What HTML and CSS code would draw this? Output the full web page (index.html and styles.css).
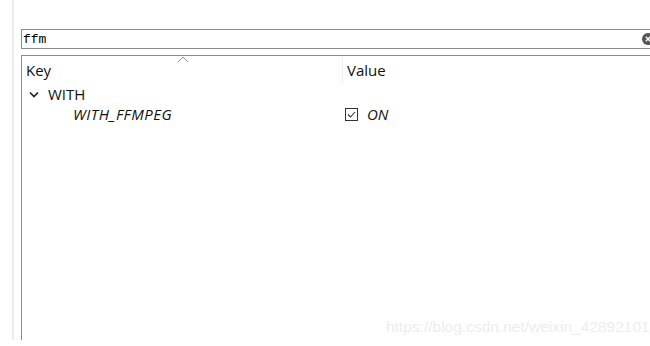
FILE: index.html
```html
<!DOCTYPE html>
<html lang="en">
<head>
    <meta charset="UTF-8">
    <title>CMake Cache</title>
    <link rel="stylesheet" href="styles.css">
</head>
<body>
    <div class="panel">
        <div class="search">
            <span class="search-text">ffm</span>
            <span class="clear-btn">
                <svg width="12" height="12" viewBox="0 0 12 12">
                    <circle cx="6" cy="6" r="6" fill="#555"/>
                    <path d="M3.8 3.8 L8.2 8.2 M8.2 3.8 L3.8 8.2" stroke="#fff" stroke-width="1.4"/>
                </svg>
            </span>
        </div>
        <div class="tree">
            <div class="tree-header">
                <div class="col-key">Key</div>
                <span class="sort-caret">
                    <svg width="12" height="7" viewBox="0 0 12 7">
                        <path d="M1 6 L6 1 L11 6" fill="none" stroke="#999" stroke-width="1"/>
                    </svg>
                </span>
                <div class="col-value">Value</div>
            </div>
            <div class="row">
                <div class="col-key group">
                    <svg class="chevron" width="10" height="7" viewBox="0 0 10 7">
                        <path d="M1 1.5 L5 5.5 L9 1.5" fill="none" stroke="#222" stroke-width="1.7"/>
                    </svg>
                    WITH
                </div>
            </div>
            <div class="row">
                <div class="col-key entry">WITH_FFMPEG</div>
                <div class="col-value entry-value">
                    <span class="checkbox">
                        <svg width="13" height="13" viewBox="0 0 13 13">
                            <rect x="0.5" y="0.5" width="12" height="12" fill="#fff" stroke="#333"/>
                            <path d="M3 6.5 L5.5 9 L10 4" fill="none" stroke="#333" stroke-width="1.1"/>
                        </svg>
                    </span>
                    ON
                </div>
            </div>
            <div class="watermark">https://blog.csdn.net/weixin_42892101</div>
        </div>
    </div>
</body>
</html>
```

FILE: styles.css
```css
body {
    margin: 0;
    background: #fff;
    font-family: "Open Sans", "Noto Sans", sans-serif;
    font-size: 15px;
    color: #111;
    overflow: hidden;
}
.panel {
    margin-left: 12px;
    padding: 29px 0 0 7px;
    border-left: 2px solid #ececec;
    height: 311px;
    width: 700px;
}
.search {
    display: flex;
    align-items: center;
    width: 660px;
    height: 18px;
    border: 1px solid #8a8a8a;
    position: relative;
}
.search-text {
    font-family: "Liberation Mono", "DejaVu Sans Mono", monospace;
    font-size: 13px;
    padding-left: 1px;
    color: #000;
}
.clear-btn {
    position: absolute;
    left: 620px;
    top: 3px;
    line-height: 0;
}
.tree {
    margin-top: 6px;
    width: 660px;
    height: 287px;
    border: 1px solid #8a8a8a;
    position: relative;
}
.tree-header {
    display: flex;
    height: 28px;
    align-items: center;
    position: relative;
}
.col-key {
    width: 316px;
    padding-left: 4px;
}
.tree-header .col-value {
    border-left: 1px solid #eef0f4;
    padding-left: 4px;
    height: 100%;
    display: flex;
    align-items: center;
}
.sort-caret {
    position: absolute;
    left: 155px;
    top: 0;
    line-height: 0;
}
.row {
    display: flex;
    height: 20px;
    align-items: center;
}
.group {
    display: flex;
    align-items: center;
    padding-left: 7px;
}
.chevron {
    margin-right: 9px;
}
.entry {
    font-style: italic;
    letter-spacing: 0.5px;
    padding-left: 51px;
    width: 269px;
}
.entry-value {
    display: flex;
    align-items: center;
    font-style: italic;
    padding-left: 3px;
}
.checkbox {
    line-height: 0;
    margin-right: 9px;
}
.watermark {
    position: absolute;
    left: 364px;
    top: 262px;
    font-family: "Liberation Sans", Arial, sans-serif;
    font-size: 15.5px;
    color: #ededed;
}
```
